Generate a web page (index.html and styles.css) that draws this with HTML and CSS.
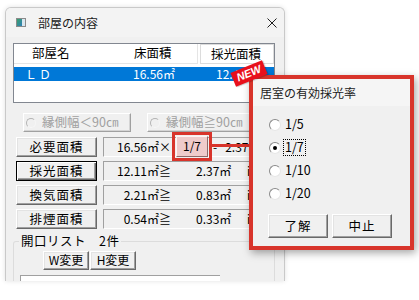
FILE: index.html
```html
<!DOCTYPE html>
<html lang="ja">
<head>
<meta charset="utf-8">
<title>部屋の内容</title>
<link rel="stylesheet" href="styles.css">
</head>
<body>
<div class="win">
  <div class="titlebar">
    <svg class="appicon" width="10" height="9" viewBox="0 0 10 9">
      <defs><linearGradient id="g" x1="0" y1="0" x2="1" y2="1"><stop offset="0" stop-color="#3aa06a"/><stop offset="1" stop-color="#2f7fb8"/></linearGradient></defs>
      <rect x="0.5" y="0.5" width="9" height="8" fill="#fff" stroke="#8a8a8a"/>
      <rect x="1" y="1" width="5" height="7" fill="url(#g)"/>
      <rect x="6" y="1" width="3" height="7" fill="#d9e6ee"/>
    </svg>
    <span class="title">部屋の内容</span>
    <svg class="close" width="10" height="10" viewBox="0 0 10 10"><path d="M0.5 0.5L9.5 9.5M9.5 0.5L0.5 9.5" stroke="#1f1f1f" stroke-width="1"/></svg>
  </div>
  <div class="content">
    <div class="listview">
      <div class="lv-head">
        <div class="hc c1">部屋名</div>
        <div class="hc c2">床面積</div>
        <div class="hc c3">採光面積</div>
      </div>
      <div class="lv-row selected">
        <div class="c1">ＬＤ</div>
        <div class="c2">16.56㎡</div>
        <div class="c3">12.45㎡</div>
      </div>
    </div>

    <div class="radios">
      <div class="rbtn"><span class="rcirc"></span>縁側幅＜90㎝</div>
      <div class="rbtn"><span class="rcirc"></span>縁側幅≧90㎝</div>
    </div>

    <div class="arow">
      <div class="btn">必要面積</div>
      <div class="val">
        <span class="v1">16.56㎡×</span>
        <span class="ratio">1/7</span>
        <span class="dash">-</span>
        <span class="v2r">2.37㎡</span>
      </div>
    </div>
    <div class="arow">
      <div class="btn default">採光面積</div>
      <div class="val">
        <span class="v1">12.11㎡≧</span>
        <span class="v2">2.37㎡</span>
        <span class="vi">i</span>
      </div>
    </div>
    <div class="arow">
      <div class="btn">換気面積</div>
      <div class="val">
        <span class="v1">2.21㎡≧</span>
        <span class="v2">0.83㎡</span>
        <span class="vi">i</span>
      </div>
    </div>
    <div class="arow">
      <div class="btn">排煙面積</div>
      <div class="val">
        <span class="v1">0.54㎡≧</span>
        <span class="v2">0.33㎡</span>
        <span class="vi">i</span>
      </div>
    </div>

    <div class="group">
      <div class="glabel">開口リスト　2件</div>
      <div class="gbtns">
        <div class="btn small">W変更</div>
        <div class="btn small">H変更</div>
      </div>
      <div class="olist"></div>
    </div>
  </div>
</div>

<div class="popup">
  <div class="ptitle">居室の有効採光率</div>
  <div class="pbody">
    <div class="opt"><span class="radio"></span><span class="otext">1/5</span></div>
    <div class="opt"><span class="radio checked"></span><span class="otext focus">1/7</span></div>
    <div class="opt"><span class="radio"></span><span class="otext">1/10</span></div>
    <div class="opt"><span class="radio"></span><span class="otext">1/20</span></div>
    <div class="pbtns">
      <div class="btn pb">了解</div>
      <div class="btn pb">中止</div>
    </div>
  </div>
</div>

<div class="badge"><span>NEW</span></div>
</body>
</html>
```

FILE: styles.css
```css
* { box-sizing: border-box; }

html, body {
  margin: 0;
  padding: 0;
}

body {
  width: 419px;
  height: 300px;
  overflow: hidden;
  position: relative;
  padding: 7px 0 0 5px;
  background: #ffffff;
  font-family: "Noto Sans CJK JP", "Noto Sans", sans-serif;
  color: #000;
  font-size: 12px;
  line-height: 1;
}

/* ---------- main window ---------- */
.win {
  width: 280px;
  height: 274px;
  background: #f0f0f0;
  border: 1px solid #c9c9c9;
  border-bottom: none;
  border-radius: 6px 6px 0 0;
  box-shadow: 0 0 5px rgba(0, 0, 0, 0.12);
  overflow: hidden;
}

.titlebar {
  height: 29px;
  display: flex;
  align-items: center;
  padding-left: 10px;
  background: #f3f3f3;
}

.appicon { display: block; }

.title {
  margin-left: 12px;
  font-size: 12px;
  color: #1a1a1a;
  flex: 1;
}

.close {
  display: block;
  margin-right: 7px;
}

.content {
  padding: 6px 0 0 7px;
}

/* list view */
.listview {
  width: 262px;
  height: 60px;
  background: #fff;
  border: 1px solid #828790;
}

.lv-head {
  display: flex;
  height: 20px;
}

.hc {
  height: 20px;
  display: flex;
  align-items: center;
  font-size: 12.5px;
  border-bottom: 1px solid #e5e5e5;
}

.lv-head .c1 { width: 86px; padding-left: 18px; }
.lv-head .c2 { width: 98px; padding-left: 34px; border-right: 1px solid #e5e5e5; }
.lv-head .c3 { width: 74px; margin-left: 2px; padding-left: 10px; border: 1px solid #dcdcdc; }

.lv-row {
  display: flex;
  height: 14px;
  margin-top: 3px;
  align-items: center;
  font-size: 12px;
}

.lv-row.selected { background: #0078d7; color: #fff; }

.lv-row .c1 { width: 86px; padding-left: 11px; letter-spacing: 2px; }
.lv-row .c2 { width: 98px; text-align: right; padding-right: 23px; }
.lv-row .c3 { flex: 1; padding-left: 18px; }

/* disabled radio buttons */
.radios {
  display: flex;
  gap: 16px;
  margin: 10px 0 0 10px;
}

.rbtn {
  width: 108px;
  height: 19px;
  display: flex;
  align-items: center;
  padding-left: 2px;
  color: #a0a0a0;
  font-size: 12.5px;
  background: #f0f0f0;
  border: 1px solid;
  border-color: #ffffff #a0a0a0 #a0a0a0 #ffffff;
  box-shadow: inset -1px -1px 0 #d4d4d4;
}

.rcirc {
  width: 10px;
  height: 10px;
  border-radius: 50%;
  border: 1px solid #b4b4b4;
  border-right-color: #f6f6f6;
  border-bottom-color: #f6f6f6;
  margin-right: 6px;
}

/* area rows */
.arow {
  display: flex;
  align-items: flex-start;
  margin: 5px 0 0 3px;
  height: 20px;
}
.arow + .arow { margin-top: 4px; }

.btn {
  display: flex;
  align-items: center;
  justify-content: center;
  background: #f0f0f0;
  border: 1px solid;
  border-color: #ffffff #696969 #696969 #ffffff;
  box-shadow: inset -1px -1px 0 #a0a0a0, inset 1px 1px 0 #e3e3e3;
  font-size: 12.5px;
  letter-spacing: 1px;
}

.arow .btn {
  width: 81px;
  height: 20px;
}

.btn.default {
  border-color: #000;
  box-shadow: inset 1px 1px 0 #fff, inset -1px -1px 0 #696969, inset -2px -2px 0 #a0a0a0;
}

.val {
  position: relative;
  margin-left: 6px;
  width: 172px;
  height: 20px;
  display: flex;
  align-items: center;
  border: 1px solid;
  border-color: #a0a0a0 #ffffff #ffffff #a0a0a0;
  font-size: 12px;
}

.v1 {
  width: 67px;
  text-align: right;
  white-space: nowrap;
}

.v2 { margin-left: 25px; width: 51px; white-space: nowrap; }
.vi { font-size: 12px; }

.ratio {
  position: relative;
  margin-left: 5px;
  margin-top: -2px;
  width: 32px;
  height: 21px;
  display: flex;
  align-items: center;
  justify-content: center;
  background: #efcbcb;
  border: 1px solid;
  border-color: #fff4f4 #8c6a6a #8c6a6a #fff4f4;
  outline: 3px solid #d8342b;
  outline-offset: 1px;
  font-size: 12px;
}

.ratio::after {
  content: "";
  position: absolute;
  left: calc(100% + 5px);
  top: 7px;
  width: 38px;
  height: 3px;
  background: #d8342b;
}

.dash { margin-left: 5px; }
.v2r { margin-left: 8px; white-space: nowrap; }

/* group box */
.group {
  margin-top: 12px;
  width: 262px;
  height: 60px;
  border: 1px solid #dcdcdc;
  border-bottom: none;
  border-radius: 3px 3px 0 0;
}

.glabel {
  display: block;
  width: fit-content;
  margin: -7px 0 0 5px;
  padding: 0 2px;
  background: #f0f0f0;
  font-size: 12.5px;
  letter-spacing: 0.5px;
}

.gbtns {
  display: flex;
  gap: 1px;
  margin: 3px 0 0 29px;
}

.btn.small {
  width: 46px;
  height: 19px;
  font-size: 12px;
  letter-spacing: 0;
}

.olist {
  margin: 5px 0 0 6px;
  width: 200px;
  height: 20px;
  background: #fff;
  border-top: 1px solid #a0a0a0;
  border-left: 1px solid #a0a0a0;
}

/* ---------- popup dialog ---------- */
.popup {
  position: absolute;
  left: 249px;
  top: 75px;
  width: 165px;
  height: 175px;
  border: 4px solid #d8342b;
  background: #f0f0f0;
  box-shadow: 2px 3px 8px rgba(0, 0, 0, 0.35);
}

.ptitle {
  height: 27px;
  background: #f5f5f5;
  padding-left: 7px;
  display: flex;
  align-items: center;
  font-size: 12px;
  color: #1a1a1a;
}

.pbody {
  padding: 7px 0 0 16px;
}

.opt {
  height: 23px;
  display: flex;
  align-items: center;
  font-size: 12.5px;
}

.radio {
  width: 12px;
  height: 12px;
  border-radius: 50%;
  background: #fff;
  border: 1px solid #8a8a8a;
  border-right-color: #e6e6e6;
  border-bottom-color: #e6e6e6;
  position: relative;
}

.radio.checked::after {
  content: "";
  position: absolute;
  left: 3px;
  top: 3px;
  width: 4px;
  height: 4px;
  border-radius: 50%;
  background: #000;
}

.otext {
  margin-left: 3px;
  padding: 1px 1px;
}

.otext.focus {
  outline: 1px dotted #000;
}

.pbtns {
  display: flex;
  gap: 4px;
  margin-top: 9px;
  margin-left: -1px;
}

.btn.pb {
  width: 60px;
  height: 24px;
  font-size: 12.5px;
  letter-spacing: 1px;
}

/* ---------- NEW badge ---------- */
.badge {
  position: absolute;
  left: 232px;
  top: 66px;
  width: 34px;
  height: 15px;
  background: #e8101c;
  transform: rotate(-22deg);
  display: flex;
  align-items: center;
  justify-content: center;
  box-shadow: 1px 1px 1px rgba(0,0,0,0.2);
}

.badge span {
  font-family: "Liberation Sans", "DejaVu Sans", sans-serif;
  font-weight: bold;
  font-style: italic;
  font-size: 11px;
  color: #fff;
}
```
